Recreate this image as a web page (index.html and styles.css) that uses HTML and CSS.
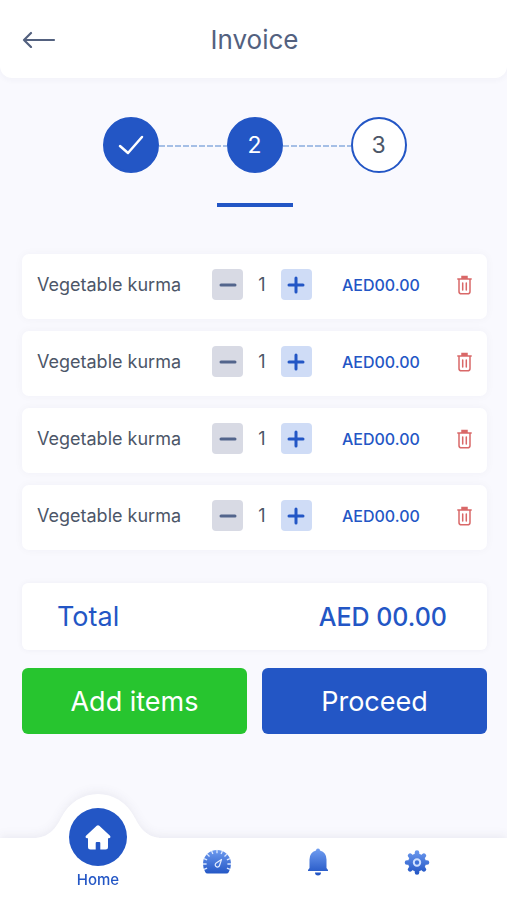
FILE: index.html
```html
<!DOCTYPE html>
<html lang="en">
<head>
<meta charset="UTF-8">
<meta name="viewport" content="width=device-width, initial-scale=1.0">
<title>Invoice</title>
<link rel="stylesheet" href="styles.css">
</head>
<body>
    <!-- Shared icons -->
    <svg class="sprite" aria-hidden="true">
        <defs>
            <linearGradient id="nav-fill" gradientUnits="userSpaceOnUse" x1="0" y1="1" x2="0" y2="26">
                <stop offset="0" stop-color="#6f9cf0"/>
                <stop offset="1" stop-color="#2356c5"/>
            </linearGradient>
        </defs>
        <symbol id="minus" viewBox="0 0 18 18">
            <path d="M2 9h14" stroke="currentColor" stroke-width="3" stroke-linecap="round"/>
        </symbol>
        <symbol id="plus" viewBox="0 0 18 18">
            <path d="M2 9h14M9 2v14" stroke="currentColor" stroke-width="3" stroke-linecap="round"/>
        </symbol>
        <symbol id="trash" viewBox="0 0 15 20">
            <path d="M0.8 4h13.4M5 3.6V1.6h5v2M2 4.4v12q0 2.4 2.4 2.4h6.2q2.4 0 2.4-2.4v-12M5.7 8v7M9.3 8v7" fill="none" stroke="currentColor" stroke-width="1.5" stroke-linecap="round"/>
            <path d="M5 1.5h5v2.5H5z" fill="currentColor"/>
        </symbol>
    </svg>

    <!-- Header -->
    <header class="header">
        <a class="back" href="#" aria-label="Back">
            <svg width="34" height="18" viewBox="0 0 34 18" fill="none" stroke="currentColor" stroke-width="2.2" stroke-linecap="round" stroke-linejoin="round">
                <path d="M9 3L2 10l7 7M2 10h30"/>
            </svg>
        </a>
        <h1>Invoice</h1>
    </header>

    <main class="content">
        <!-- Steps -->
        <ol class="steps">
            <li class="step done" aria-label="Step 1 complete">
                <svg width="26" height="20" viewBox="0 0 26 20" fill="none" stroke="currentColor" stroke-width="2.5" stroke-linecap="round" stroke-linejoin="round">
                    <path d="M2 11l8 7L24 2"/>
                </svg>
            </li>
            <li class="step done current">2</li>
            <li class="step">3</li>
        </ol>

        <!-- Items -->
        <ul class="items">
            <li class="item">
                <span class="name">Vegetable kurma</span>
                <div class="quantity">
                    <button class="minus" aria-label="Remove one"><svg><use href="#minus"/></svg></button>
                    <span>1</span>
                    <button class="plus" aria-label="Add one"><svg><use href="#plus"/></svg></button>
                </div>
                <span class="price">AED00.00</span>
                <button class="delete" aria-label="Delete item"><svg><use href="#trash"/></svg></button>
            </li>
            <li class="item">
                <span class="name">Vegetable kurma</span>
                <div class="quantity">
                    <button class="minus" aria-label="Remove one"><svg><use href="#minus"/></svg></button>
                    <span>1</span>
                    <button class="plus" aria-label="Add one"><svg><use href="#plus"/></svg></button>
                </div>
                <span class="price">AED00.00</span>
                <button class="delete" aria-label="Delete item"><svg><use href="#trash"/></svg></button>
            </li>
            <li class="item">
                <span class="name">Vegetable kurma</span>
                <div class="quantity">
                    <button class="minus" aria-label="Remove one"><svg><use href="#minus"/></svg></button>
                    <span>1</span>
                    <button class="plus" aria-label="Add one"><svg><use href="#plus"/></svg></button>
                </div>
                <span class="price">AED00.00</span>
                <button class="delete" aria-label="Delete item"><svg><use href="#trash"/></svg></button>
            </li>
            <li class="item">
                <span class="name">Vegetable kurma</span>
                <div class="quantity">
                    <button class="minus" aria-label="Remove one"><svg><use href="#minus"/></svg></button>
                    <span>1</span>
                    <button class="plus" aria-label="Add one"><svg><use href="#plus"/></svg></button>
                </div>
                <span class="price">AED00.00</span>
                <button class="delete" aria-label="Delete item"><svg><use href="#trash"/></svg></button>
            </li>
        </ul>

        <!-- Total -->
        <div class="total">
            <span>Total</span>
            <strong>AED 00.00</strong>
        </div>

        <div class="actions">
            <button class="add">Add items</button>
            <button class="proceed">Proceed</button>
        </div>
    </main>

    <!-- Bottom navigation -->
    <nav class="nav">
        <a class="home" href="#">
            <svg class="bump" viewBox="0 0 130 45" aria-hidden="true">
                <path d="M0 44C16 44 23 34 28 24C36 8 50 0 65 0C80 0 94 8 102 24C107 34 114 44 130 44V45H0z" fill="#fff"/>
            </svg>
            <span class="home-icon">
                <svg width="26" height="26" viewBox="0 0 26 26">
                    <path d="M11.700 1.800q1.300-1.100 2.600 0L25 11.800q1.300 1.900-1 2.400h-1V23q0 2.500-2.500 2.500H15.300v-6.500q0-1-1-1h-2.600q-1 0-1 1v6.500H5.500Q3 25.500 3 23v-8.800H2q-2.300-.5-1-2.400z" fill="#fff"/>
                </svg>
            </span>
            <span>Home</span>
        </a>
        <a href="#" aria-label="Dashboard">
            <svg width="28" height="28" viewBox="0 0 28 28">
                <path d="M4.500 25.500q-1.500 0-2.200-1.300Q0 20.500 0 16a14 14 0 0 1 28 0q0 4.500-2.300 8.200-.7 1.300-2.200 1.300z" fill="url(#nav-fill)"/>
                <path d="M14 1.800v3.400M8.600 3l1.300 3.100M4.100 6.100l2.400 2.400M1 10.600l3.100 1.300M0 16h3.600M1 21.400l3.100-1.300M19.400 3l-1.300 3.100M23.900 6.100l-2.400 2.400M27 10.600l-3.100 1.300M28 16h-3.600M27 21.400l-3.100-1.300" stroke="#dce8ff" stroke-width="1.300"/>
                <path d="M18.500 11.500l-2 6a2.200 2.200 0 1 1-3.300-2.500z" fill="none" stroke="#e4edff" stroke-width="1.200" stroke-linejoin="round"/>
            </svg>
        </a>
        <a href="#" aria-label="Notifications">
            <svg width="20" height="28" viewBox="0 0 20 28">
                <path d="M8 2.500a2 2 0 0 1 4 0q6.500 2 6.500 9V20l1.500 2v1H0v-1l1.500-2v-8.500q0-7 6.500-9z" fill="url(#nav-fill)"/>
                <path d="M7 24.500h6a3 3 0 0 1-6 0z" fill="#2356c5"/>
            </svg>
        </a>
        <a href="#" aria-label="Settings">
            <svg width="26" height="28" viewBox="0 0 26 28">
                <path d="M13 4.500l.01 20M3 14.500l20 .01M6.100 7.600l13.800 13.800M19.900 7.600L6.100 21.400" stroke="url(#nav-fill)" stroke-width="4.600" stroke-linecap="round"/>
                <circle cx="13" cy="14.500" r="9" fill="url(#nav-fill)"/>
                <circle cx="13" cy="14.500" r="3.200" fill="#3f72d8" stroke="#cfe0ff" stroke-width="2"/>
            </svg>
        </a>
    </nav>
</body>
</html>
```
FILE: styles.css
```css
/* General Styles */
* {
    margin: 0;
    padding: 0;
    box-sizing: border-box;
}

body {
    display: flex;
    flex-direction: column;
    min-height: 100vh;
    background: #f9f9fe;
    color: #4c5668;
    font-family: 'Inter', sans-serif;
    font-size: 18px;
}

button {
    border: none;
    background: none;
    font: inherit;
    cursor: pointer;
}

a {
    color: inherit;
    text-decoration: none;
}

ul,
ol {
    list-style: none;
}

svg {
    display: block;
}

.sprite {
    position: absolute;
    width: 0;
    height: 0;
}

/* Header */
.header {
    display: grid;
    grid-template-columns: 34px 1fr 34px;
    align-items: center;
    height: 78px;
    padding: 0 20px 0 22px;
    background: #fff;
    border-radius: 0 0 12px 12px;
    box-shadow: 0 2px 6px rgba(40, 40, 90, 0.04);
    color: #53617f;
}

.header h1 {
    font-size: 26px;
    font-weight: 400;
    text-align: center;
}

.content {
    padding: 39px 20px 40px 22px;
}

/* Steps */
.steps {
    display: flex;
    justify-content: center;
    gap: 68px;
    margin-bottom: 81px;
}

.step {
    position: relative;
    display: flex;
    align-items: center;
    justify-content: center;
    width: 56px;
    height: 56px;
    border: 2px solid #2356c5;
    border-radius: 50%;
    background: #fff;
    font-size: 23px;
}

.step.done {
    background: #2356c5;
    color: #fff;
}

.step + .step::before {
    content: "";
    position: absolute;
    left: -70px;
    top: 50%;
    width: 68px;
    height: 2px;
    background: repeating-linear-gradient(90deg, #a5bfe6 0 6px, transparent 6px 8px);
}

.step.current::after {
    content: "";
    position: absolute;
    top: 84px;
    left: -12px;
    right: -12px;
    height: 4px;
    background: #2356c5;
}

/* Items */
.items {
    display: grid;
    gap: 12px;
    margin-bottom: 33px;
}

.item {
    display: grid;
    grid-template-columns: 1fr 100px 85px 15px;
    align-items: center;
    gap: 30px;
    height: 65px;
    padding: 0 15px 4px;
    background: #fff;
    border-radius: 7px;
    box-shadow: 0 0 10px rgba(40, 40, 80, 0.04);
    white-space: nowrap;
}

.quantity {
    display: flex;
    align-items: center;
    justify-content: space-between;
}

.quantity button {
    display: flex;
    align-items: center;
    justify-content: center;
    width: 31px;
    height: 31px;
    border-radius: 4px;
}

.quantity svg {
    width: 18px;
    height: 18px;
}

.minus {
    background: #d8dae4;
    color: #53658c;
}

.plus {
    background: #cfdcf6;
    color: #2356c5;
}

.price {
    color: #2356c5;
    font-size: 16px;
    font-weight: 500;
}

.delete {
    color: #d96868;
}

.delete svg {
    width: 15px;
    height: 20px;
}

/* Total */
.total {
    display: flex;
    align-items: center;
    justify-content: space-between;
    height: 67px;
    margin-bottom: 18px;
    padding: 0 40px 0 35px;
    background: #fff;
    border-radius: 6px;
    box-shadow: 0 0 6px rgba(40, 40, 80, 0.05);
    color: #2356c5;
    font-size: 27px;
}

.total strong {
    font-size: 25px;
    font-weight: 500;
}

.actions {
    display: grid;
    grid-template-columns: 1fr 1fr;
    gap: 15px;
}

.actions button {
    height: 66px;
    border-radius: 6px;
    color: #fff;
    font-size: 27px;
}

.actions .add {
    background: #27c52f;
}

.actions .proceed {
    background: #2356c5;
}

/* Bottom Navigation */
.nav {
    display: flex;
    align-items: flex-start;
    justify-content: space-between;
    height: 62px;
    margin-top: auto;
    padding: 10px 77px 0 69px;
    background: #fff;
    filter: drop-shadow(0 -3px 4px rgba(40, 40, 60, 0.06));
}

.home {
    position: relative;
    display: flex;
    flex-direction: column;
    align-items: center;
    gap: 5px;
    width: 58px;
    margin-top: -40px;
    color: #2356c5;
    font-size: 15px;
    font-weight: 500;
    line-height: 18px;
}

.bump {
    position: absolute;
    top: -14px;
    left: -36px;
    width: 130px;
    height: 45px;
}

.home-icon {
    position: relative;
    display: flex;
    align-items: center;
    justify-content: center;
    width: 58px;
    height: 58px;
    border-radius: 50%;
    background: #2356c5;
}
```
